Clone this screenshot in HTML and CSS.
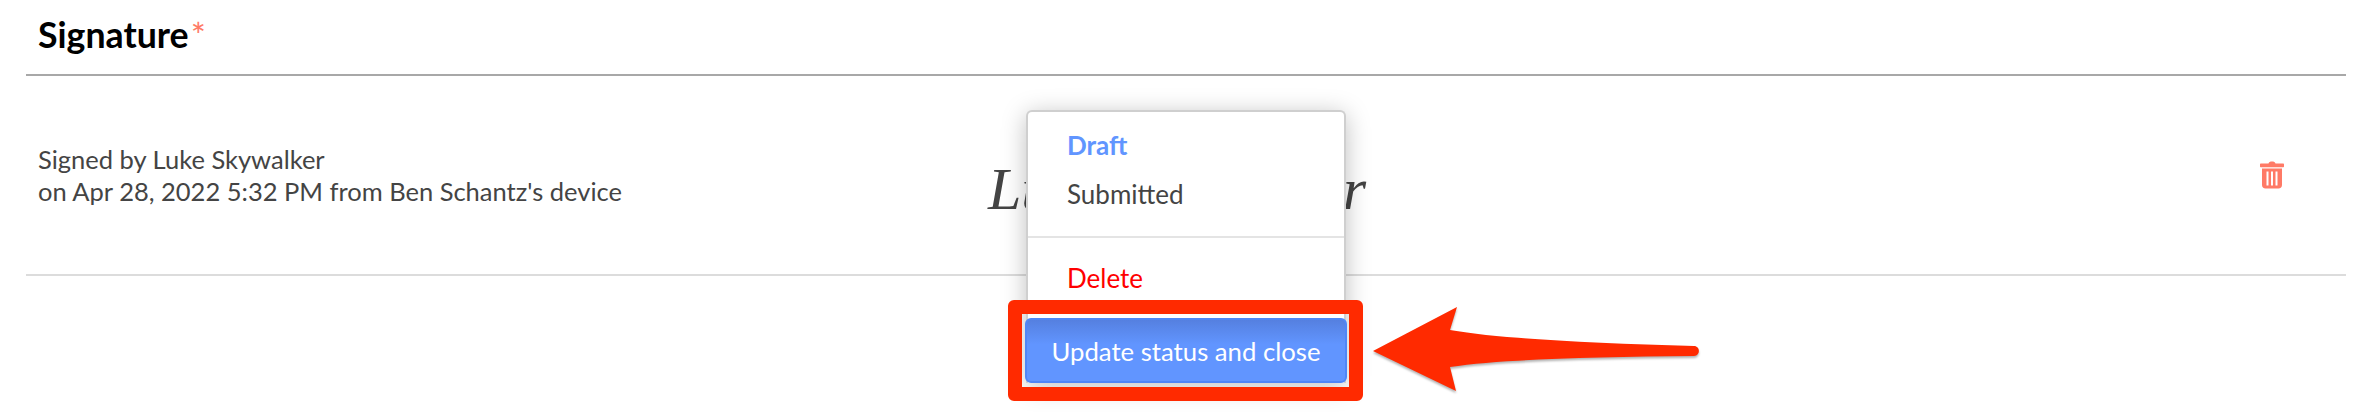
FILE: index.html
```html
<!DOCTYPE html>
<html lang="en">
  <head>
    <meta charset="UTF-8" />
    <meta name="viewport" content="width=device-width, initial-scale=1.0" />
    <title>Signature</title>
    <link rel="stylesheet" href="styles.css">
  </head>
  <body>
    <section class="signature">
      <h2 class="titel">Signature<span class="stjerne">*</span></h2>
      <div class="raekke">
        <p class="info">Signed by Luke Skywalker<br />on Apr 28, 2022 5:32 PM from Ben Schantz's device</p>
        <div class="skrift">Luke Skywalker</div>
        <svg class="slet" viewBox="0 0 24 28" width="24" height="28" aria-label="Delete">
          <path d="M8.5 2.6C9 1 10.2.5 12 .5s3 .5 3.5 2.1H23c.6 0 1 .4 1 1v1.9c0 .4-.3.7-.7.7H.7c-.4 0-.7-.3-.7-.7V3.600c0-.6.4-1 1-1z" />
          <path fill-rule="evenodd" d="M2 7.500h20V24c0 2.200-1.400 3.500-3.500 3.500h-13C3.400 27.500 2 26.200 2 24zM6.500 10.500v14h2v-14zM11 10.500v14h2v-14zM15.500 10.500v14h2v-14z" />
        </svg>
      </div>
    </section>

    <div class="menu">
      <ul class="valg">
        <li class="valgt">Draft</li>
        <li>Submitted</li>
      </ul>
      <ul class="valg valg-slet">
        <li>Delete</li>
      </ul>
      <button class="opdater">Update status and close</button>
    </div>

    <!-- annotation -->
    <div class="markering"></div>
    <svg class="pil" viewBox="0 0 340 100" width="340" height="100">
      <path d="M1 46 L85 2 L78 25 C130 34 220 38 322 41 C328 41 329 50 322 51 C220 52 130 54 78 62 L84 86 Z" />
    </svg>
  </body>
</html>
```

FILE: styles.css
```css
body {
  margin: 0;
  height: 412px;
  overflow: hidden;
  background-color: white;
  font-family: "Lato", sans-serif;
  color: #444;
}
.signature {
  margin: 0 26px;
}
.titel {
  height: 74px;
  margin: 0;
  padding-left: 12px;
  border-bottom: 2px solid #a8a8a8;
  font-size: 35.7px;
  line-height: 70px;
  font-weight: 700;
  color: black;
}
.stjerne {
  margin-left: 2px;
  font-weight: 400;
  color: #ff7a66;
}
.raekke {
  display: flex;
  align-items: center;
  height: 198px;
  padding: 0 62px 0 12px;
  border-bottom: 2px solid #dcdcdc;
}
.info {
  flex: 0 0 950px;
  margin: 0;
  font-size: 25.5px;
  line-height: 32px;
}
.skrift {
  margin-top: 28px;
  font-family: "Liberation Serif", serif;
  font-style: italic;
  font-size: 60px;
  white-space: nowrap;
}
.slet {
  margin-left: auto;
  fill: #ff7a66;
}

/*menu*/
.menu {
  position: absolute;
  left: 1026px;
  top: 110px;
  width: 320px;
  height: 273px;
  box-sizing: border-box;
  border: 2px solid #cfcfcf;
  border-bottom: none;
  border-radius: 6px 6px 0 0;
  background-color: white;
  box-shadow: 0 4px 24px rgba(0, 0, 0, 0.25);
}
.valg {
  margin: 0;
  padding: 9px 0 17px 39px;
  list-style: none;
  font-size: 26px;
  line-height: 49px;
}
.valg-slet {
  padding-top: 16px;
  border-top: 2px solid #e4e4e4;
  color: red;
}
.valgt {
  font-weight: 700;
  color: #6195ff;
}
.opdater {
  position: absolute;
  left: -3px;
  bottom: 0;
  width: 322px;
  height: 65px;
  border: 2px solid #4f86f7;
  border-radius: 6px;
  background: linear-gradient(#5580e0, #6195ff 40%);
  font-family: "Lato", sans-serif;
  font-size: 25.7px;
  color: white;
}

/*annotation*/
.markering {
  position: absolute;
  left: 1008px;
  top: 300px;
  width: 327px;
  height: 73px;
  border: 14px solid #ff2a00;
  border-radius: 6px;
}
.pil {
  position: absolute;
  left: 1372px;
  top: 305px;
  fill: #ff2a00;
  filter: drop-shadow(0 2px 1px rgba(0, 0, 0, 0.3));
}
```
